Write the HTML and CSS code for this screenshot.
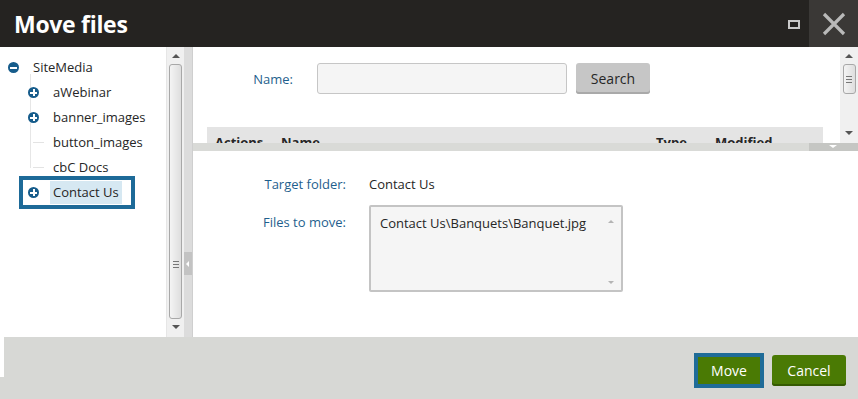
FILE: index.html
```html
<!DOCTYPE html>
<html lang="en">
<head>
    <meta charset="UTF-8">
    <title>Move files</title>
    <link rel="stylesheet" href="styles.css">
</head>
<body>
    <div class="dialog">
        <header class="titlebar">
            <h1 class="title">Move files</h1>
            <div class="title-actions">
                <span class="maximize"></span>
                <span class="close">
                    <svg width="24" height="24" viewBox="0 0 24 24">
                        <path d="M2 2 L22 22 M22 2 L2 22" stroke="#b9b9b9" stroke-width="3.2" fill="none"/>
                    </svg>
                </span>
            </div>
        </header>

        <div class="main">
            <aside class="tree-pane">
                <ul class="tree">
                    <li>
                        <div class="row"><span class="toggle minus"></span><span class="label">SiteMedia</span></div>
                        <ul class="children">
                            <li><div class="row"><span class="toggle plus"></span><span class="label">aWebinar</span></div></li>
                            <li><div class="row"><span class="toggle plus"></span><span class="label">banner_images</span></div></li>
                            <li><div class="row"><span class="stub"></span><span class="label">button_images</span></div></li>
                            <li><div class="row"><span class="stub"></span><span class="label">cbC Docs</span></div></li>
                            <li><div class="row selected"><span class="toggle plus"></span><span class="label">Contact Us</span></div></li>
                        </ul>
                    </li>
                </ul>
            </aside>
            <div class="vscroll tree-scroll">
                <span class="arrow up"></span>
                <span class="thumb"><span class="grip"></span></span>
                <span class="arrow down"></span>
            </div>
            <div class="vsplit"><span class="vsplit-handle"></span></div>

            <section class="content">
                <div class="search-pane">
                    <div class="search-body">
                        <div class="search-row">
                            <label class="field-label name-label" for="name">Name:</label>
                            <input class="text-input" id="name" type="text">
                            <button class="btn-gray">Search</button>
                        </div>
                        <div class="grid-header">
                            <span class="col-actions">Actions</span>
                            <span class="col-name">Name</span>
                            <span class="col-type">Type</span>
                            <span class="col-modified">Modified</span>
                        </div>
                    </div>
                    <div class="vscroll page-scroll">
                        <span class="arrow up"></span>
                        <span class="thumb short"><span class="grip"></span></span>
                        <span class="spacer"></span>
                        <span class="arrow down"></span>
                    </div>
                </div>
                <div class="hsplit"><span class="hsplit-handle"></span></div>
                <div class="form-pane">
                    <div class="form-row">
                        <span class="field-label form-label">Target folder:</span>
                        <span class="value">Contact Us</span>
                    </div>
                    <div class="form-row top">
                        <span class="field-label form-label">Files to move:</span>
                        <div class="files-box">
                            <span class="files-text">Contact Us\Banquets\Banquet.jpg</span>
                            <span class="box-arrows">
                                <span class="mini up"></span>
                                <span class="mini down"></span>
                            </span>
                        </div>
                    </div>
                </div>
            </section>
        </div>

        <footer class="footer">
            <button class="btn-green focused">Move</button>
            <button class="btn-green">Cancel</button>
        </footer>
    </div>
</body>
</html>
```

FILE: styles.css
```css
body {
    margin: 0;
    font-family: 'Open Sans', 'Noto Sans', sans-serif;
    font-size: 13px;
    color: #262626;
    background: #fff;
    overflow: hidden;
}

.dialog {
    width: 858px;
    height: 399px;
    display: flex;
    flex-direction: column;
}

/* Title bar */
.titlebar {
    height: 47px;
    flex: none;
    background: #252321;
    display: flex;
    justify-content: space-between;
    align-items: stretch;
}

.title {
    margin: 0;
    padding-left: 14px;
    color: #fff;
    font-size: 23px;
    font-weight: bold;
    line-height: 49px;
    letter-spacing: -0.3px;
}

.title-actions {
    display: flex;
    align-items: center;
}

.maximize {
    width: 8px;
    height: 5px;
    border: 2px solid #c9c9c9;
    margin-right: 9px;
    margin-top: 1px;
}

.close {
    width: 49px;
    height: 47px;
    background: #3a3836;
    display: flex;
    align-items: center;
    justify-content: center;
}

/* Main area */
.main {
    height: 290px;
    flex: none;
    display: flex;
}

.tree-pane {
    width: 166px;
    flex: none;
    background: #fff;
}

.tree,
.children {
    list-style: none;
    margin: 0;
    padding: 0;
}

.tree {
    padding-top: 8px;
}

.children {
    margin-left: 20px;
    position: relative;
}

.children::before {
    content: "";
    position: absolute;
    left: 10px;
    top: -6px;
    height: 94px;
    border-left: 1px solid #e6e6e6;
}

.row {
    display: flex;
    align-items: center;
    width: fit-content;
    height: 25px;
    padding: 0 9px 0 5px;
    margin-left: 3px;
    position: relative;
}

.toggle {
    width: 11px;
    height: 11px;
    border-radius: 50%;
    background: #165c8b;
    position: relative;
    flex: none;
}

.toggle::before {
    content: "";
    position: absolute;
    left: 2px;
    top: 4.5px;
    width: 7px;
    height: 2px;
    background: #fff;
}

.toggle.plus::after {
    content: "";
    position: absolute;
    left: 4.5px;
    top: 2px;
    width: 2px;
    height: 7px;
    background: #fff;
}

.stub {
    width: 11px;
    height: 1px;
    margin-left: 5px;
    margin-right: -5px;
    background: #e3e3e3;
    flex: none;
}

.label {
    margin-left: 11px;
    padding: 0 3px;
    line-height: 23px;
}

.row.selected {
    box-shadow: 0 0 0 4px #1d6a98;
    height: 25px;
}

.row.selected .label {
    background: #d6e8f2;
}

/* Scrollbars */
.vscroll {
    flex: none;
    width: 17px;
    background: #f0f0f0;
    display: flex;
    flex-direction: column;
    align-items: center;
}

.tree-scroll {
    border-left: 1px solid #e6e6e6;
}

.arrow {
    width: 0;
    height: 0;
    border-left: 4px solid transparent;
    border-right: 4px solid transparent;
    margin: 6px 0;
    flex: none;
}

.arrow.up {
    border-bottom: 4px solid #555;
    margin-top: 7px;
}

.arrow.down {
    border-top: 4px solid #555;
    margin-bottom: 8px;
}

.thumb {
    flex: 1;
    width: 13px;
    box-sizing: border-box;
    border: 1px solid #a8a8a8;
    border-radius: 3px;
    background: linear-gradient(to right, #f4f4f4, #dedede);
    display: flex;
    align-items: flex-end;
    justify-content: center;
    padding-bottom: 50px;
}

.thumb.short {
    flex: none;
    height: 30px;
    align-items: center;
    padding-bottom: 0;
}

.grip {
    width: 6px;
    height: 5px;
    border-top: 1px solid #777;
    border-bottom: 1px solid #777;
    position: relative;
}

.grip::after {
    content: "";
    position: absolute;
    left: 0;
    right: 0;
    top: 2px;
    border-top: 1px solid #777;
}

.spacer {
    flex: 1;
}

.vsplit {
    width: 8px;
    flex: none;
    background: #dcdcdc;
    display: flex;
    align-items: flex-end;
    padding-bottom: 62px;
    box-sizing: border-box;
}

.vsplit-handle {
    width: 8px;
    height: 23px;
    background: #c3c3c3;
    position: relative;
}

.vsplit-handle::after {
    content: "";
    position: absolute;
    left: 2px;
    top: 9px;
    border-top: 3px solid transparent;
    border-bottom: 3px solid transparent;
    border-right: 3px solid #fff;
}

/* Right content */
.content {
    flex: 1;
    display: flex;
    flex-direction: column;
    border-left: 1px solid #cfcfcf;
}

.search-pane {
    height: 96px;
    flex: none;
    display: flex;
    overflow: hidden;
}

.search-body {
    flex: 1;
    padding: 16px 16px 0 14px;
}

.page-scroll {
    width: 18px;
}

.search-row {
    display: flex;
    align-items: center;
    height: 31px;
}

.field-label {
    color: #1f5f8d;
}

.name-label {
    width: 86px;
    text-align: right;
    margin-right: 24px;
}

.text-input {
    width: 250px;
    height: 31px;
    box-sizing: border-box;
    border: 1px solid #c6c6c6;
    border-radius: 3px;
    background: #f5f5f5;
    margin-right: 9px;
    outline: none;
}

.btn-gray {
    width: 74px;
    height: 31px;
    border: none;
    border-radius: 3px;
    background: #c6c6c6;
    box-shadow: inset 0 -2px 0 #a9a9a9;
    font-family: inherit;
    font-size: 14px;
    color: #262626;
    padding: 0;
}

.grid-header {
    margin-top: 33px;
    height: 16px;
    background: #e4e4e4;
    width: 616px;
    display: flex;
    font-weight: bold;
    font-size: 13px;
    line-height: 18px;
    padding-top: 6px;
    box-sizing: border-box;
    overflow: hidden;
}

.col-actions { margin-left: 8px; width: 66px; }
.col-name { width: 375px; }
.col-type { width: 59px; }

.hsplit {
    height: 8px;
    flex: none;
    background: #d9dad7;
    display: flex;
    justify-content: flex-end;
}

.hsplit-handle {
    width: 49px;
    background: #c5c6c3;
    position: relative;
}

.hsplit-handle::after {
    content: "";
    position: absolute;
    left: 20px;
    top: 2px;
    border-left: 4px solid transparent;
    border-right: 4px solid transparent;
    border-top: 3px solid #fff;
}

.form-pane {
    flex: 1;
    padding-top: 24px;
}

.form-row {
    display: flex;
    align-items: center;
    line-height: 18px;
}

.form-row.top {
    align-items: flex-start;
    margin-top: 12px;
}

.form-label {
    width: 153px;
    text-align: right;
    margin-right: 23px;
}

.form-row.top .form-label {
    margin-top: 8px;
}

.files-box {
    width: 254px;
    height: 87px;
    box-sizing: border-box;
    border: 2px solid #c4c4c4;
    border-radius: 2px;
    background: #f5f5f5;
    display: flex;
    justify-content: space-between;
    padding: 7px 0 0 9px;
}

.box-arrows {
    display: flex;
    flex-direction: column;
    justify-content: space-between;
    padding: 6px 7px 6px 0;
}

.mini {
    width: 0;
    height: 0;
    border-left: 3px solid transparent;
    border-right: 3px solid transparent;
}

.mini.up { border-bottom: 3px solid #b4b4b4; }
.mini.down { border-top: 3px solid #b4b4b4; }

/* Footer */
.footer {
    flex: 1;
    background: linear-gradient(#fff, #fff) 0 0 / 4px 40px no-repeat, #d7d8d5;
    display: flex;
    justify-content: flex-end;
    align-items: center;
    gap: 8px;
    padding: 4px 12px 0 0;
}

.btn-green {
    height: 31px;
    border: none;
    border-radius: 3px;
    background: #4a7a04;
    box-shadow: inset 0 -2px 0 #355a02;
    color: #fff;
    font-family: inherit;
    font-size: 14px;
    padding: 0;
    width: 74px;
}

.btn-green.focused {
    width: 70px;
    height: 35px;
    border: 4px solid #1f6c98;
    border-radius: 0;
    box-shadow: none;
    padding: 0;
}
```
